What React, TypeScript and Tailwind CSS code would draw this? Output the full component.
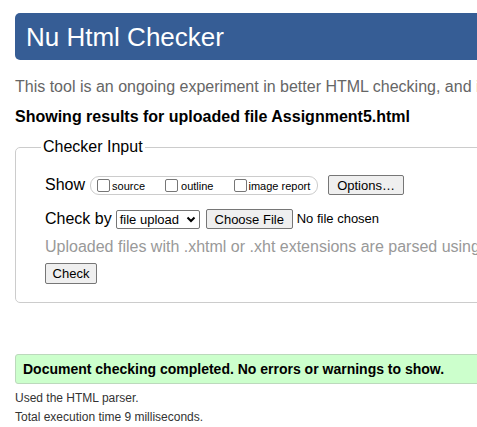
export default function App() {
  return (
    <div className="w-[477px] h-[427px] overflow-hidden bg-white font-['Liberation_Sans',Arial,sans-serif] text-black">
      <div className="w-[900px] pl-[15px] pt-[13px]">
        {/* Header */}
        <div className="h-[47px] bg-[#365d95] rounded-[5px] flex items-center pl-[11px]">
          <h1 className="text-[26px] text-white leading-none">Nu Html Checker</h1>
        </div>

        <p className="mt-[18px] text-[16px] leading-[18px] text-[#666]">
          This tool is an ongoing experiment in better HTML checking, and its behavior remains subject to change
        </p>
        <p className="mt-[12px] text-[16px] leading-[18px] font-bold">
          Showing results for uploaded file Assignment5.html
        </p>

        {/* Checker input fieldset */}
        <fieldset className="mt-[12px] h-[165px] border border-[#ccc] rounded-[5px] pl-[29px] pr-4">
          <legend className="-ml-[4px] px-[2px] text-[16px] leading-[18px]">Checker Input</legend>

          <div className="mt-[19px] flex items-center h-[20px]">
            <span className="text-[16px]">Show</span>
            <div className="ml-[5px] h-[19px] w-[228px] border border-[#ccc] rounded-[9px] flex items-center pl-[6px]">
              <Box />
              <span className="ml-[2px] text-[11px] mt-[2px]">source</span>
              <span className="ml-[20px]"><Box /></span>
              <span className="ml-[3px] text-[11px] mt-[2px]">outline</span>
              <span className="ml-[21px]"><Box /></span>
              <span className="ml-[1px] text-[11px] mt-[2px]">image report</span>
            </div>
            <button className="ml-[10px] h-[20px] w-[76px] border border-[#767676] bg-[#efefef] rounded-[2px] text-[13px] leading-none">
              Options…
            </button>
          </div>

          <div className="mt-[14px] flex items-center h-[20px]">
            <span className="text-[16px]">Check by</span>
            <div className="ml-[4px] h-[19px] w-[84px] border border-[#767676] rounded-[2px] flex items-center justify-between pl-[3px] pr-[3px]">
              <span className="text-[13px] leading-none">file upload</span>
              <svg width="10" height="7" viewBox="0 0 10 7">
                <path d="M1.5 1.5 L5 5 L8.5 1.5" fill="none" stroke="#000" strokeWidth="2" />
              </svg>
            </div>
            <button className="ml-[6px] h-[20px] w-[87px] border border-[#767676] bg-[#efefef] rounded-[2px] text-[13px] leading-none">
              Choose File
            </button>
            <span className="ml-[4px] text-[13px]">No file chosen</span>
          </div>

          <p className="mt-[9px] text-[16px] leading-[18px] text-[#999] whitespace-nowrap">
            Uploaded files with .xhtml or .xht extensions are parsed using the XML parser.
          </p>

          <button className="mt-[7px] h-[21px] w-[52px] border border-[#767676] bg-[#efefef] rounded-[2px] text-[13px] leading-none">
            Check
          </button>
        </fieldset>

        {/* Result */}
        <div className="mt-[51px] h-[30px] bg-[#ccffcc] border border-[#bcd9bc] rounded-[3px] flex items-center pl-[7px]">
          <span className="text-[14px] font-bold">Document checking completed. No errors or warnings to show.</span>
        </div>
        <p className="mt-[7px] text-[12px] leading-[14px] text-[#333]">Used the HTML parser.</p>
        <p className="mt-[5px] text-[12px] leading-[14px] text-[#333]">Total execution time 9 milliseconds.</p>
      </div>
    </div>
  );
}

function Box() {
  return <span className="block w-[13px] h-[13px] border border-[#767676] rounded-[2px] bg-white" />;
}
